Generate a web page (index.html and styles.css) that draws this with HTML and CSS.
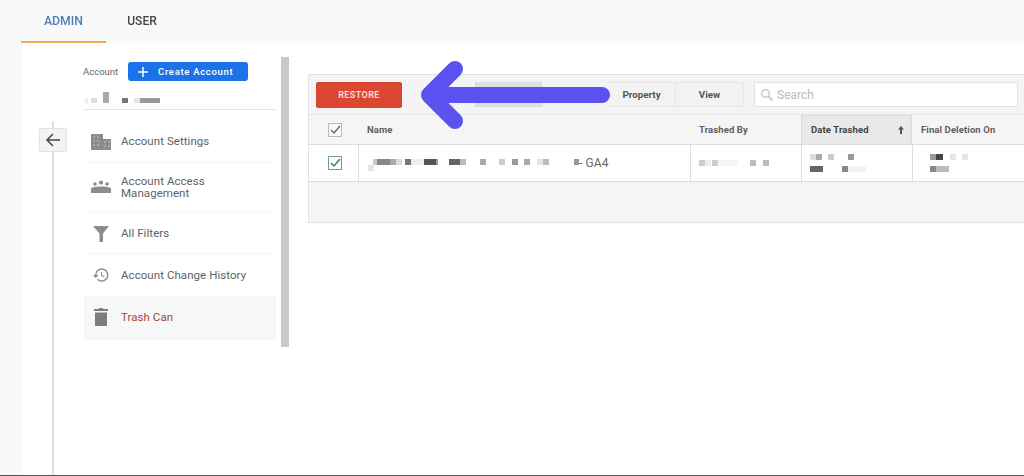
FILE: index.html
```html
<!DOCTYPE html>
<html lang="en">
<head>
<meta charset="utf-8">
<title>Admin - Trash Can</title>
<link rel="stylesheet" href="styles.css">
</head>
<body>
<div class="page">
  <nav class="tabs">
    <a class="tab tab-active">ADMIN</a>
    <a class="tab">USER</a>
  </nav>
  <main class="main">
    <div class="rail">
      <button class="back" aria-label="Back">
        <svg width="18" height="18" viewBox="0 0 18 18"><path d="M16 9H3M9 3 3 9l6 6" fill="none" stroke="#444" stroke-width="1.5"/></svg>
      </button>
    </div>
    <aside class="sidebar">
      <div class="account-head">
        <span class="account-label">Account</span>
        <button class="create"><svg width="10" height="10" viewBox="0 0 10 10"><path d="M5 0v10M0 5h10" stroke="#fff" stroke-width="1.5"/></svg><span>Create Account</span></button>
      </div>
      <div class="account-name">
        <svg width="80" height="12" viewBox="0 0 80 12"><rect x="1" y="6" width="3" height="5" fill="#eee"/><rect x="7" y="6" width="6" height="5" fill="#ddd"/><rect x="19" y="0" width="6" height="11" fill="#aaa"/><rect x="38" y="6" width="6" height="5" fill="#777"/><rect x="50" y="6" width="6" height="5" fill="#e5e5e5"/><rect x="56" y="6" width="20" height="5" fill="#999"/></svg>
      </div>
      <ul class="menu">
        <li class="item item-settings">
          <svg class="icon" width="22" height="20" viewBox="0 0 22 20"><path d="M1 3h12v5h8v11H1z" fill="#8c8c8c"/><path d="M3 5h2v2H3zm4 0h2v2H7zM3 9h2v2H3zm4 0h2v2H7zM3 13h2v2H3zm4 0h2v2H7zm7-3h2v2h-2zm4 0h2v2h-2zm-4 4h2v2h-2zm4 0h2v2h-2z" fill="#a8a8a8"/></svg>
          <span>Account Settings</span>
        </li>
        <li class="item item-access">
          <svg class="icon" width="22" height="16" viewBox="0 0 22 16"><circle cx="5" cy="5" r="1.8" fill="#8c8c8c"/><circle cx="11" cy="3.6" r="2.1" fill="#8c8c8c"/><circle cx="17" cy="5" r="1.8" fill="#8c8c8c"/><path d="M1 9.5c1-1.500 6-2 10-2s9 .5 10 2V14H1z" fill="#8c8c8c"/></svg>
          <span>Account Access Management</span>
        </li>
        <li class="item item-filters">
          <svg class="icon" width="22" height="18" viewBox="0 0 22 18"><path d="M3 1h16l-6 7.500V17H9.500V8.500z" fill="#8c8c8c"/></svg>
          <span>All Filters</span>
        </li>
        <li class="item item-history">
          <svg class="icon" width="22" height="18" viewBox="0 0 24 24"><path d="M13 3a9 9 0 0 0-9 9H1l3.890 3.890.07.14L9 12H6c0-3.870 3.130-7 7-7s7 3.130 7 7-3.130 7-7 7c-1.930 0-3.680-.79-4.940-2.060l-1.420 1.420A8.954 8.954 0 0 0 13 21a9 9 0 0 0 0-18zm-1 5v5l4.280 2.540.72-1.210-3.500-2.080V8H12z" fill="#8c8c8c"/></svg>
          <span>Account Change History</span>
        </li>
        <li class="item item-trash">
          <svg class="icon" width="22" height="22" viewBox="0 0 22 22"><path d="M5 6.500h12V20H5zM4 3h4.500l1-1h3l1 1H18v2H4z" fill="#7d7d7d"/></svg>
          <span>Trash Can</span>
        </li>
      </ul>
    </aside>
    <div class="scrollbar"></div>
    <section class="card">
      <div class="toolbar">
        <button class="restore">RESTORE</button>
        <div class="segments">
          <span class="seg seg-hidden"></span>
          <span class="seg seg-gap"></span>
          <span class="seg">Property</span>
          <span class="seg">View</span>
        </div>
        <div class="search">
          <svg width="14" height="14" viewBox="0 0 14 14"><circle cx="5.500" cy="5.500" r="3.800" fill="none" stroke="#ccc" stroke-width="1.500"/><path d="m8.500 8.500 4 4" stroke="#ccc" stroke-width="2"/></svg>
          <span>Search</span>
        </div>
      </div>
      <div class="grid grid-head">
        <div class="cell cell-check"><svg width="14" height="14" viewBox="0 0 14 14"><rect x=".5" y=".5" width="13" height="13" fill="#fafafa" stroke="#bbb"/><path d="m3 7 3 3 6-7" fill="none" stroke="#666" stroke-width="1.300"/></svg></div>
        <div class="cell">Name</div>
        <div class="cell">Trashed By</div>
        <div class="cell cell-sorted"><span>Date Trashed</span><svg width="6" height="8" viewBox="0 0 6 8"><path d="M3 0 6 3.500H4V8H2V3.500H0z" fill="#555"/></svg></div>
        <div class="cell">Final Deletion On</div>
      </div>
      <div class="grid grid-row">
        <div class="cell cell-check"><svg width="14" height="14" viewBox="0 0 14 14"><rect x=".5" y=".5" width="13" height="13" fill="#fff" stroke="#6f9a9c"/><path d="m3 7 3 3 6-7" fill="none" stroke="#39797c" stroke-width="1.500"/></svg></div>
        <div class="cell cell-name">
          <svg width="218" height="18" viewBox="0 0 218 18"><rect x="8" y="5" width="4" height="6" fill="#ccc"/><rect x="12" y="5" width="13" height="6" fill="#888"/><rect x="25" y="5" width="6" height="6" fill="#aaa"/><rect x="31" y="5" width="6" height="6" fill="#ddd"/><rect x="40" y="5" width="6" height="6" fill="#777"/><rect x="46" y="5" width="13" height="6" fill="#eee"/><rect x="59" y="5" width="12" height="6" fill="#555"/><rect x="71" y="5" width="2" height="6" fill="#999"/><rect x="84" y="5" width="11" height="6" fill="#666"/><rect x="95" y="5" width="6" height="6" fill="#bbb"/><rect x="115" y="5" width="6" height="6" fill="#aaa"/><rect x="134" y="5" width="6" height="6" fill="#ccc"/><rect x="147" y="5" width="6" height="6" fill="#999"/><rect x="159" y="5" width="6" height="6" fill="#aaa"/><rect x="172" y="5" width="6" height="6" fill="#e5e5e5"/><rect x="178" y="5" width="6" height="6" fill="#bbb"/><rect x="209" y="5" width="5" height="6" fill="#999"/><rect x="3" y="11" width="6" height="6" fill="#e5e5e5"/></svg>
          <span>- GA4</span>
        </div>
        <div class="cell cell-blur">
          <svg width="72" height="10" viewBox="0 0 72 10"><rect x="0" y="2" width="6" height="6" fill="#ccc"/><rect x="6" y="2" width="6" height="6" fill="#eee"/><rect x="13" y="2" width="6" height="6" fill="#ccc"/><rect x="19" y="2" width="20" height="6" fill="#f5f5f5"/><rect x="51" y="2" width="6" height="6" fill="#bbb"/><rect x="64" y="2" width="6" height="6" fill="#bbb"/></svg>
        </div>
        <div class="cell cell-blur">
          <svg width="64" height="24" viewBox="0 0 64 24"><rect x="0" y="3" width="6" height="6" fill="#ddd"/><rect x="6" y="3" width="6" height="6" fill="#aaa"/><rect x="18" y="3" width="6" height="6" fill="#ccc"/><rect x="38" y="3" width="6" height="6" fill="#999"/><rect x="0" y="15" width="13" height="6" fill="#666"/><rect x="32" y="15" width="6" height="6" fill="#888"/><rect x="38" y="15" width="18" height="6" fill="#f3f3f3"/></svg>
        </div>
        <div class="cell cell-blur cell-final">
          <svg width="48" height="24" viewBox="0 0 48 24"><rect x="0" y="3" width="6" height="6" fill="#999"/><rect x="6" y="3" width="7" height="6" fill="#444"/><rect x="20" y="3" width="6" height="6" fill="#e5e5e5"/><rect x="32" y="3" width="6" height="6" fill="#e5e5e5"/><rect x="0" y="15" width="6" height="6" fill="#888"/><rect x="6" y="15" width="13" height="6" fill="#bbb"/></svg>
        </div>
      </div>
      <div class="card-foot"></div>
    </section>
    <svg class="arrow" width="200" height="76" viewBox="0 0 200 76"><path d="M181 39H8M34 13 8 39l26 26" fill="none" stroke="#5b50f0" stroke-width="16" stroke-linecap="round" stroke-linejoin="round"/></svg>
  </main>
  <div class="bottom-line"></div>
</div>
</body>
</html>
```

FILE: styles.css
```css
* { box-sizing: border-box; }
html, body { margin: 0; padding: 0; }
body {
  font-family: Roboto, "Liberation Sans", sans-serif;
  color: #555;
  background: #f8f9fb;
  overflow: hidden;
}
button { font-family: inherit; }
.page {
  width: 1024px;
  height: 476px;
  display: flex;
  flex-direction: column;
  overflow: hidden;
  filter: blur(0.45px);
}
.tabs {
  height: 43px;
  display: flex;
  padding-left: 21px;
  flex: none;
}
.tab {
  width: 85px;
  height: 43px;
  font-size: 12px;
  font-weight: 500;
  line-height: 42px;
  text-align: center;
  color: #444;
}
.tab-active {
  color: #4a7fb5;
  font-size: 12.300px;
  border-bottom: 2px solid #eeb04f;
}
.tab-active + .tab { width: 72px; }
.main {
  position: relative;
  flex: 1;
  margin-left: 22px;
  display: flex;
  background: #fff;
  min-height: 0;
}
.rail {
  position: relative;
  width: 62px;
  flex: none;
  display: flex;
  justify-content: center;
  align-items: flex-start;
  padding-top: 85px;
}
.rail::before {
  content: "";
  position: absolute;
  left: 30px;
  top: 78px;
  bottom: 0;
  width: 2px;
  background: #dedede;
}
.back {
  position: relative;
  width: 28px;
  height: 24px;
  padding: 0;
  display: flex;
  align-items: center;
  justify-content: center;
  background: #f3f3f3;
  border: 1px solid #e2e2e2;
  border-radius: 2px;
}
.sidebar {
  width: 192px;
  flex: none;
  padding-top: 19px;
}
.account-head {
  display: flex;
  align-items: center;
  height: 19px;
}
.account-label {
  width: 44px;
  font-size: 9.500px;
  color: #666;
  margin-left: -1px;
  margin-right: 1px;
}
.create {
  width: 120px;
  height: 19px;
  padding: 0 0 0 10px;
  display: flex;
  align-items: center;
  gap: 10px;
  background: #1a73e8;
  border: 0;
  border-radius: 3px;
  color: #fff;
  font-size: 9.500px;
  font-weight: 500;
  letter-spacing: .7px;
}
.account-name {
  height: 29px;
  padding-top: 11px;
  border-bottom: 1px solid #e3e3e3;
  line-height: 0;
}
.menu {
  list-style: none;
  margin: 0;
  padding: 0;
}
.item {
  display: flex;
  align-items: center;
  padding-left: 6px;
  gap: 9px;
  font-size: 11.500px;
  line-height: 12.500px;
  letter-spacing: .06px;
  color: #5f5f5f;
  border-bottom: 1px solid #f4f4f4;
}
.item span { width: 130px; }
.icon { flex: none; }
.item-settings { height: 53px; padding-top: 10px; }
.item-access { height: 49px; }
.item-filters { height: 42px; padding-top: 2px; }
.item-history { height: 42px; border-bottom: 0; }
.item-trash {
  height: 44px;
  padding-bottom: 2px;
  background: #f6f8f8;
  color: #a94442;
  border-bottom: 0;
}
.scrollbar {
  flex: none;
  width: 8px;
  height: 290px;
  margin: 14px 19px 0 5px;
  background: #c9c9c9;
}
.card {
  flex: 1;
  align-self: flex-start;
  margin-top: 31px;
  margin-right: -10px;
  background: #f5f5f5;
  border: 1px solid #e2e2e2;
  border-right: 0;
  min-width: 0;
}
.toolbar {
  height: 40px;
  padding: 7px 0 0 7px;
  display: flex;
  align-items: flex-start;
  background: #f4f4f4;
  border-bottom: 1px solid #e2e2e2;
}
.restore {
  width: 86px;
  height: 26px;
  padding: 0;
  background: #dc4733;
  border: 1px solid #d5442f;
  border-radius: 2px;
  color: #f8d8d2;
  font-size: 9px;
  font-weight: 700;
  letter-spacing: .4px;
}
.segments {
  display: flex;
  margin-left: 73px;
  height: 25px;
}
.seg {
  width: 68px;
  border: 1px solid #e6e6e6;
  background: #f3f3f3;
  font-size: 9.800px;
  font-weight: 700;
  line-height: 23px;
  text-align: center;
  color: #555;
}
.seg-hidden { width: 67px; background: #e0e0e4; border-color: #dcdcdc; }
.seg-gap { width: 66px; background: #f4f4f4; border-color: #f4f4f4; }
.seg + .seg { border-left: 0; }
.search {
  width: 264px;
  height: 25px;
  margin-left: 10px;
  padding-left: 5px;
  display: flex;
  align-items: center;
  gap: 3px;
  background: #fff;
  border: 1px solid #e2e2e2;
  color: #bbb;
  font-size: 12px;
}
.grid {
  display: grid;
  grid-template-columns: 49px 332px 111px 111px 1fr;
  background: #fff;
  border-bottom: 1px solid #dcdcdc;
}
.grid-head {
  height: 30px;
  background: #f5f5f5;
}
.cell {
  display: flex;
  align-items: center;
  padding-left: 9px;
  font-size: 9.500px;
  font-weight: 700;
  letter-spacing: .1px;
  color: #5f5f5f;
}
.cell-check { justify-content: center; padding: 0 0 0 2px; }
.cell-sorted {
  justify-content: space-between;
  padding-right: 7px;
  background: #e9e9e9;
  color: #444;
  border-left: 1px solid #dcdcdc;
  border-right: 1px solid #dcdcdc;
  box-shadow: inset 0 1px 2px #ddd;
}
.grid-row { height: 37px; }
.grid-row .cell { border-left: 1px solid #dcdcdc; padding-left: 8px; }
.grid-row .cell-check { border-left: 0; padding: 0 0 0 2px; }
.cell-name svg { flex: none; margin-right: -4px; margin-left: -2px; }
.cell-name span {
  font-size: 12px;
  font-weight: 400;
  color: #666;
}
.grid-row .cell-final { padding-left: 17px; }
.card-foot { height: 40px; background: #f5f5f5; }
.arrow {
  position: absolute;
  left: 399px;
  top: 13px;
}
.bottom-line {
  flex: none;
  height: 1px;
  background: #555;
}
```
